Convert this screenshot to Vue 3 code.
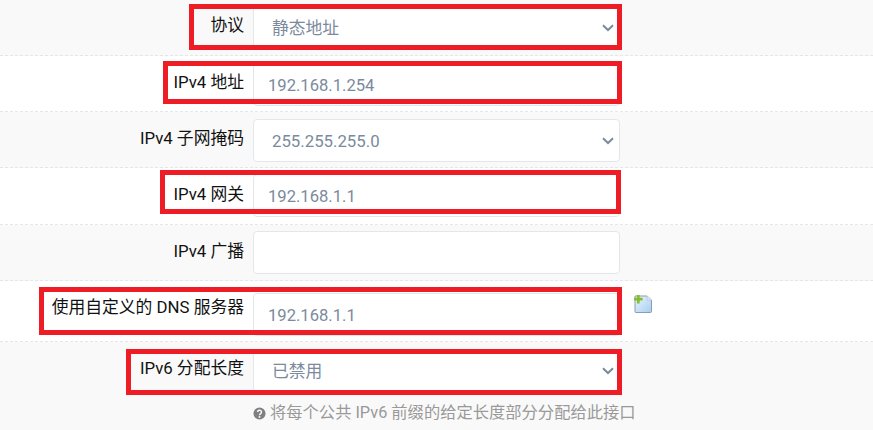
<script setup>
const rows = [
  { label: '协议', kind: 'select', value: '静态地址', h: 56, top: 6, labelTop: 14, mark: { left: 189, top: 4, width: 433, height: 46 } },
  { label: 'IPv4 地址', kind: 'input', value: '192.168.1.254', h: 56, top: 7, labelTop: 15, mark: { left: 163, top: 5, width: 459, height: 43 } },
  { label: 'IPv4 子网掩码', kind: 'select', value: '255.255.255.0', h: 56, top: 7, labelTop: 15 },
  { label: 'IPv4 网关', kind: 'input', value: '192.168.1.1', h: 57, top: 6, labelTop: 15, mark: { left: 160, top: 2, width: 461, height: 44 } },
  { label: 'IPv4 广播', kind: 'input', value: '', h: 56, top: 6, labelTop: 15 },
  { label: '使用自定义的 DNS 服务器', kind: 'input', value: '192.168.1.1', h: 61, top: 12, labelTop: 15, add: true, mark: { left: 39, top: 6, width: 583, height: 48 } },
  { label: 'IPv6 分配长度', kind: 'select', value: '已禁用', h: 88, top: 7, labelTop: 15, last: true, mark: { left: 126, top: 7, width: 496, height: 46 }, help: '将每个公共 IPv6 前缀的给定长度部分分配给此接口' },
]
</script>

<template>
  <div class="page">
    <div
      v-for="(row, i) in rows"
      :key="row.label"
      class="row"
      :class="{ odd: i % 2 === 0, last: row.last }"
      :style="{ height: row.h + 'px' }"
    >
      <label class="label" :style="{ paddingTop: row.labelTop + 'px' }">{{ row.label }}</label>
      <div class="body" :style="{ paddingTop: row.top + 'px' }">
        <div class="line">
          <div class="field">
            <template v-if="row.kind === 'select'">
              <select class="control select">
                <option>{{ row.value }}</option>
              </select>
              <svg class="chev" viewBox="0 0 12 8" width="12" height="8">
                <path d="M1 1.2 L6 6 L11 1.2" fill="none" stroke="#7b8a9c" stroke-width="2" />
              </svg>
            </template>
            <input v-else class="control input" type="text" :value="row.value" />
          </div>
          <svg v-if="row.add" class="add" viewBox="0 0 18 18" width="18" height="18">
            <defs>
              <linearGradient id="sheet" x1="0" y1="0" x2="1" y2="1">
                <stop offset="0" stop-color="#eef6fd" />
                <stop offset="1" stop-color="#a4cdf2" />
              </linearGradient>
            </defs>
            <path d="M1 1 H13 L17.5 5 V16.5 a1 1 0 0 1 -1 1 H2 a1 1 0 0 1 -1 -1 Z" fill="url(#sheet)" stroke="#8a9cb0" stroke-width="1" />
            <path d="M13 1 V5 H17.5" fill="#dcebf8" stroke="#b4c4d4" stroke-width="0.8" />
            <path d="M4.3 0 V8.4 M0 4.2 H8.6" stroke="#84bd2d" stroke-width="2.7" />
          </svg>
        </div>
        <div v-if="row.help" class="help">
          <svg class="q" viewBox="0 0 14 14" width="13" height="13">
            <circle cx="7" cy="7" r="6.5" fill="#808080" />
            <path d="M4.9 5.5 A2.1 2 0 1 1 8.2 7.1 C7.4 7.6 7 7.9 7 8.8" fill="none" stroke="#f9f9f9" stroke-width="1.6" />
            <rect x="6.1" y="9.8" width="1.8" height="1.8" fill="#f9f9f9" />
          </svg>
          <span>{{ row.help }}</span>
        </div>
      </div>
      <div
        v-if="row.mark"
        class="mark"
        :style="{
          left: row.mark.left + 'px',
          top: row.mark.top + 'px',
          width: row.mark.width + 'px',
          height: row.mark.height + 'px',
        }"
      ></div>
    </div>
  </div>
</template>

<style scoped>
.page {
  width: 873px;
  height: 430px;
  overflow: hidden;
  background: #fff;
  font-family: Roboto, "Noto Sans CJK SC", sans-serif;
}
.row {
  position: relative;
  display: grid;
  grid-template-columns: 244px 1fr;
  column-gap: 9px;
  box-sizing: border-box;
  border-bottom: 1px dashed #e4e7ea;
  background: #fff;
}
.row.odd {
  background: #f9f9f9;
}
.row.last {
  border-bottom: 0;
}
.label {
  text-align: right;
  font-size: 16.8px;
  line-height: 22px;
  color: #111;
  white-space: nowrap;
}
.line {
  display: flex;
  align-items: flex-start;
  gap: 14px;
}
.field {
  position: relative;
  width: 367px;
  height: 43px;
  flex: none;
}
.control {
  display: block;
  width: 100%;
  height: 100%;
  box-sizing: border-box;
  margin: 0;
  border: 1px solid #e4e7ea;
  border-radius: 4px;
  background: #fff;
  color: #7b8a9c;
  font: inherit;
  outline: none;
}
.input {
  padding: 1px 14px 0;
  font-size: 16.6px;
}
.select {
  appearance: none;
  -webkit-appearance: none;
  padding: 0 30px 0 18px;
  font-size: 16.8px;
}
.chev {
  position: absolute;
  right: 6px;
  top: 18px;
  pointer-events: none;
}
.add {
  margin-top: 2px;
}
.help {
  display: flex;
  align-items: center;
  gap: 4px;
  margin-top: 11px;
  font-size: 16.3px;
  line-height: 20px;
  color: #999;
  white-space: nowrap;
}
.q {
  flex: none;
}
.mark {
  position: absolute;
  box-sizing: border-box;
  border: 5px solid #ee1c25;
  pointer-events: none;
}
</style>
